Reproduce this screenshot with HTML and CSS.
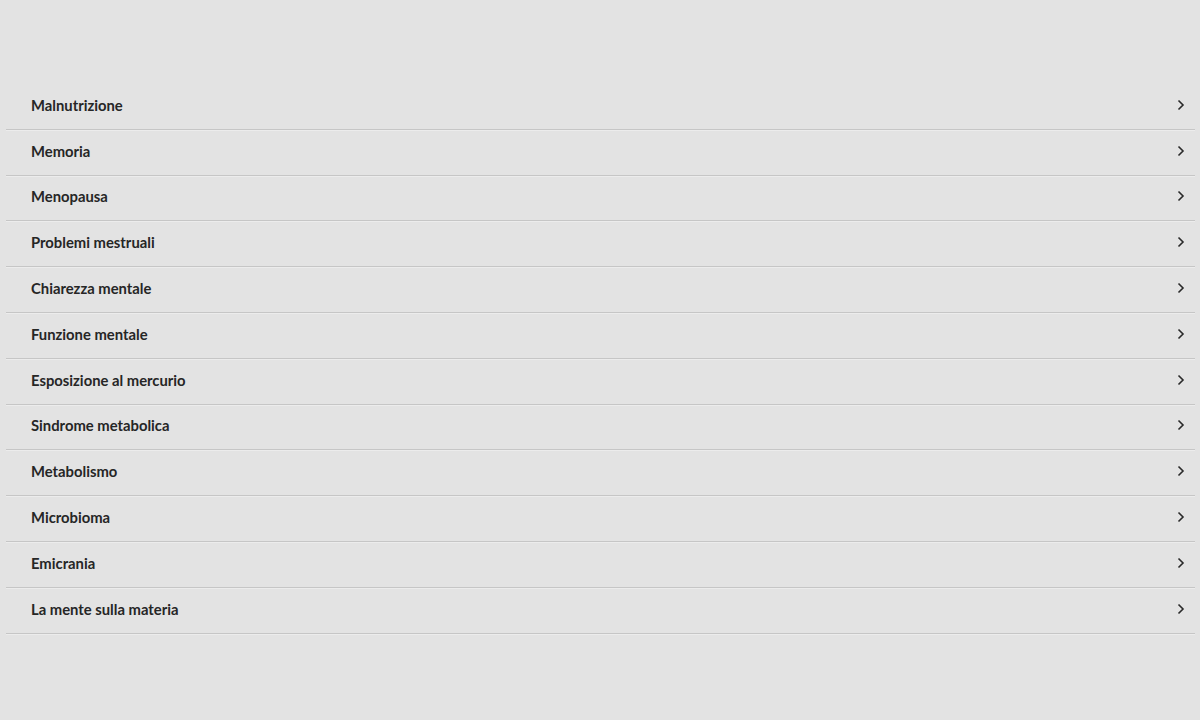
FILE: index.html
```html
<!DOCTYPE html>
<html lang="it">
<head>
<meta charset="utf-8">
<title>Argomenti</title>
<link rel="stylesheet" href="styles.css">
</head>
<body>
<ul class="list">
  <li class="item"><span class="label">Malnutrizione</span><svg class="chev" viewBox="0 0 10 12"><path d="M2.5 1.5 7 6 2.5 10.5"/></svg></li>
  <li class="item"><span class="label">Memoria</span><svg class="chev" viewBox="0 0 10 12"><path d="M2.5 1.5 7 6 2.5 10.5"/></svg></li>
  <li class="item"><span class="label">Menopausa</span><svg class="chev" viewBox="0 0 10 12"><path d="M2.5 1.5 7 6 2.5 10.5"/></svg></li>
  <li class="item"><span class="label">Problemi mestruali</span><svg class="chev" viewBox="0 0 10 12"><path d="M2.5 1.5 7 6 2.5 10.5"/></svg></li>
  <li class="item"><span class="label">Chiarezza mentale</span><svg class="chev" viewBox="0 0 10 12"><path d="M2.5 1.5 7 6 2.5 10.5"/></svg></li>
  <li class="item"><span class="label">Funzione mentale</span><svg class="chev" viewBox="0 0 10 12"><path d="M2.5 1.5 7 6 2.5 10.5"/></svg></li>
  <li class="item"><span class="label">Esposizione al mercurio</span><svg class="chev" viewBox="0 0 10 12"><path d="M2.5 1.5 7 6 2.5 10.5"/></svg></li>
  <li class="item"><span class="label">Sindrome metabolica</span><svg class="chev" viewBox="0 0 10 12"><path d="M2.5 1.5 7 6 2.5 10.5"/></svg></li>
  <li class="item"><span class="label">Metabolismo</span><svg class="chev" viewBox="0 0 10 12"><path d="M2.5 1.5 7 6 2.5 10.5"/></svg></li>
  <li class="item"><span class="label">Microbioma</span><svg class="chev" viewBox="0 0 10 12"><path d="M2.5 1.5 7 6 2.5 10.5"/></svg></li>
  <li class="item"><span class="label">Emicrania</span><svg class="chev" viewBox="0 0 10 12"><path d="M2.5 1.5 7 6 2.5 10.5"/></svg></li>
  <li class="item"><span class="label">La mente sulla materia</span><svg class="chev" viewBox="0 0 10 12"><path d="M2.5 1.5 7 6 2.5 10.5"/></svg></li>
</ul>
</body>
</html>
```
FILE: styles.css
```css
html, body {
  margin: 0;
  padding: 0;
  background: #e3e3e3;
  height: 100%;
}
body {
  font-family: Lato, "Liberation Sans", sans-serif;
  color: #222;
}
.list {
  list-style: none;
  margin: 0;
  padding: 84px 5px 0 6px;
}
.item {
  display: flex;
  align-items: center;
  justify-content: space-between;
  height: 41.8px;
  padding: 0 9px 3px 25px;
  border-bottom: 1px solid #c6c6c6;
  box-shadow: 0 1px 0 #ececec;
}
.label {
  font-size: 14.8px;
  font-weight: 700;
  color: #262626;
}
.chev {
  width: 10px;
  height: 12px;
  fill: none;
  stroke: #2a2a2a;
  stroke-width: 1.6;
}
```
